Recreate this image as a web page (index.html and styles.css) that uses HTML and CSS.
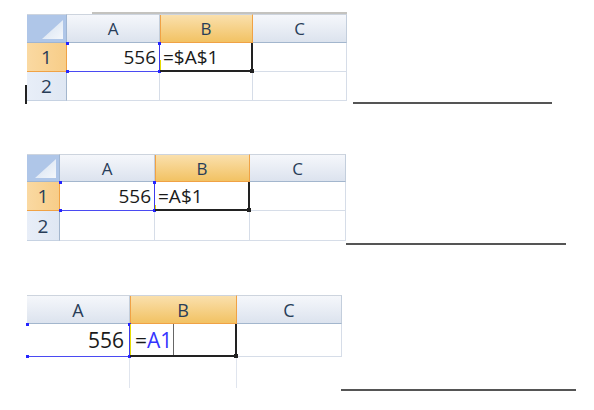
FILE: index.html
```html
<!DOCTYPE html>
<html>
<head>
<meta charset="utf-8">
<link rel="stylesheet" href="styles.css">
</head>
<body>
<div class="page">
  <div class="topline"></div>
  <section class="block b1">
    <div class="sheet s1">
      <div class="corner"></div><div class="ch">A</div><div class="ch sel">B</div><div class="ch">C</div>
      <div class="rh sel">1</div><div class="cell num ref">556</div><div class="cell act part">=$A$1</div><div class="cell"></div>
      <div class="rh">2</div><div class="cell"></div><div class="cell"></div><div class="cell"></div>
    </div>
    <div class="blank"></div>
    <div class="mark"></div>
  </section>
  <section class="block b2">
    <div class="sheet s2">
      <div class="corner"></div><div class="ch">A</div><div class="ch sel">B</div><div class="ch">C</div>
      <div class="rh sel">1</div><div class="cell num ref">556</div><div class="cell act short">=A$1</div><div class="cell"></div>
      <div class="rh">2</div><div class="cell"></div><div class="cell"></div><div class="cell"></div>
    </div>
    <div class="blank"></div>
  </section>
  <section class="block b3">
    <div class="sheet s3">
      <div class="ch">A</div><div class="ch sel">B</div><div class="ch">C</div>
      <div class="cell num ref">556</div><div class="cell act full"><span class="edit">=<span class="blue">A1</span></span></div><div class="cell"></div>
      <div class="cell empty"></div><div class="cell empty"></div><div class="cell empty last"></div>
    </div>
    <div class="blank"></div>
  </section>
</div>
</body>
</html>
```

FILE: styles.css
```css
* { box-sizing: border-box; margin: 0; padding: 0; }
body { background: #fff; font-family: "Open Sans", "Liberation Sans", sans-serif; color: #1a1a1a; }
.page { padding: 12px 0 0 27px; width: 594px; height: 410px; }
.topline { margin-left: 65px; width: 255px; height: 2px; background: #c4c3bf; }

.block { display: flex; align-items: flex-end; position: relative; }
.b2 { margin-top: 53px; }
.b3 { margin-top: 54px; }

.blank { height: 2px; background: #555; flex: none; }
.b1 .blank { width: 199px; margin: 0 0 -3px 6px; }
.b2 .blank { width: 220px; margin: 0 0 -4px 0; }
.b3 .blank { width: 235px; margin: 0 0 -3px -1px; }

.mark { position: absolute; left: -2px; top: 71px; width: 2px; height: 19px; background: #222; }

.sheet { display: grid; flex: none; }
.s1 { grid-template-columns: 40px 93px 93px 94px; grid-template-rows: 29px 29px 29px; }
.s2 { grid-template-columns: 33px 95px 95px 96px; grid-template-rows: 28px 29px 30px; }
.s3 { grid-template-columns: 103px 107px 105px; grid-template-rows: 29px 33px 31px; }

.ch {
  display: flex; align-items: center; justify-content: center;
  font-size: 17px; color: #283d58;
  background: linear-gradient(#f5f7fb, #dce3ee);
  border-top: 1px solid #cdd4de;
  border-right: 1px solid #c3cedc;
  border-bottom: 1px solid #a3b6cd;
}
.s3 .ch { font-size: 18px; }
.ch.sel {
  background: linear-gradient(#fae0ad, #f2c263);
  border-right-color: #f0a245;
  border-bottom-color: #f0a245;
  box-shadow: inset 1px 0 #f0a245;
}

.corner {
  position: relative;
  background: #afc6e8;
  border-top: 1px solid #cdd4de;
  border-right: 1px solid #9fb5d2;
  border-bottom: 1px solid #9fb5d2;
}
.corner::after {
  content: ""; position: absolute; right: 3px; bottom: 3px; width: 21px; height: 19px;
  background: linear-gradient(135deg, #d2dff0, #f4f7fb);
  clip-path: polygon(100% 0, 100% 100%, 0 100%);
}

.rh {
  display: flex; align-items: center; justify-content: center;
  font-size: 19px; color: #283d58;
  background: linear-gradient(90deg, #e8eef8, #dfe7f3);
  border-right: 1px solid #a3b6cd;
  border-bottom: 1px solid #c6d2e2;
}
.rh.sel {
  background: linear-gradient(90deg, #fad9a2, #f7cd88);
  border-right-color: #f0a245;
  border-bottom-color: #f0a245;
}

.cell {
  display: flex; align-items: center;
  padding: 0 3px;
  font-size: 19px;
  border-right: 1px solid #d6dde8;
  border-bottom: 1px solid #d6dde8;
}
.s3 .cell { font-size: 21px; padding: 0 4px; }
.num { justify-content: flex-end; }
.s3 .num { padding-right: 5px; }
.empty { border-bottom: none; border-right-color: #e0e5ee; }
.empty.last { border-right: none; }

.ref { position: relative; border-right: 1px solid #3c3cec; border-bottom: 1px solid #4a4af2; }
.ref::before, .ref::after {
  content: ""; position: absolute; top: -1px; bottom: -2px; width: 3px;
  background:
    linear-gradient(#2424ff, #2424ff) top / 3px 3px no-repeat,
    linear-gradient(#2424ff, #2424ff) bottom / 3px 3px no-repeat;
}
.ref::before { left: -1px; }
.ref::after { right: -2px; }

.act { position: relative; border-right: 2px solid #222; border-bottom: 2px solid #222; }
.act::after { content: ""; position: absolute; right: -3px; bottom: -3px; width: 4px; height: 4px; background: #222; }
.act::before { content: ""; position: absolute; left: 0; bottom: 0; width: 1px; height: 10px; background: #e6dc00; }
.act.short::before { height: 4px; }
.act.full::before { top: 0; height: auto; }

.s3 .act { align-items: stretch; padding-left: 5px; }
.edit { display: flex; align-items: center; padding-right: 1px; border-right: 1px solid #666; }
.blue { color: #3434ff; }
```
